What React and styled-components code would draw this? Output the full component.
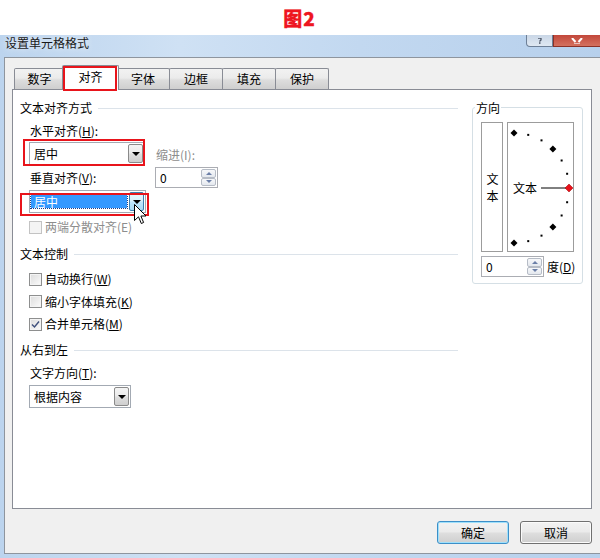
import React from 'react';
import styled, { createGlobalStyle } from 'styled-components';

const GlobalStyle = createGlobalStyle`
  html, body {
    margin: 0;
    padding: 0;
    background: #fff;
  }
  body {
    font-family: 'Noto Sans CJK SC', 'Liberation Sans', sans-serif;
    font-size: 12px;
    color: #000;
  }
`;

const TABS = ['数字', '对齐', '字体', '边框', '填充', '保护'];

const Dial = () => {
  const cx = 6;
  const cy = 65;
  const r = 55;
  const marks = [];
  for (let a = -90; a <= 90; a += 15) {
    const rad = (a * Math.PI) / 180;
    const x = cx + r * Math.cos(rad);
    const y = cy - r * Math.sin(rad);
    if (a === 0) {
      marks.push(<path key={a} d={`M${x} ${y - 4}L${x + 4} ${y}L${x} ${y + 4}L${x - 4} ${y}Z`} fill="#e8101a" stroke="#900" strokeWidth="0.5" />);
    } else if (a % 45 === 0) {
      marks.push(<path key={a} d={`M${x} ${y - 3.5}L${x + 3.5} ${y}L${x} ${y + 3.5}L${x - 3.5} ${y}Z`} fill="#000" />);
    } else {
      marks.push(<rect key={a} x={x - 1} y={y - 1} width="2" height="2" fill="#000" />);
    }
  }
  return (
    <svg width="65" height="128" viewBox="0 0 65 128">
      <text x="5" y="69.5" fontSize="12" fontFamily="'Noto Sans CJK SC', sans-serif" fill="#000">文本</text>
      <line x1="33" y1="65" x2="58" y2="65" stroke="#000" strokeWidth="1" />
      {marks}
    </svg>
  );
};

const Cursor = () => (
  <CursorSvg width="13" height="21" viewBox="0 0 13 21">
    <path d="M0.5 0.5 L0.5 16.5 L4.5 12.8 L7.3 19.5 L9.6 18.5 L6.9 12 L12 12 Z" fill="#fff" stroke="#000" strokeWidth="1" strokeLinejoin="round" />
  </CursorSvg>
);

const Combo = ({ value, width, focused, mark }) => (
  <ComboBox $width={width}>
    <ComboText $focused={focused}>{value}</ComboText>
    <ComboButton $hot={focused}>
      <Arrow />
    </ComboButton>
    {mark && <RedMark {...mark} />}
    {focused && <Cursor />}
  </ComboBox>
);

const Spin = ({ value }) => (
  <SpinBox>
    <SpinValue>{value}</SpinValue>
    <SpinButtons>
      <SpinBtn><SpinArrow $up /></SpinBtn>
      <SpinBtn><SpinArrow /></SpinBtn>
    </SpinButtons>
  </SpinBox>
);

const Check = ({ checked, disabled, children }) => (
  <CheckRow $disabled={disabled}>
    <CheckBox $disabled={disabled}>
      {checked && (
        <svg width="9" height="9" viewBox="0 0 9 9">
          <path d="M1 4.5 L3.5 7 L8 1.5" fill="none" stroke="#3e4f7c" strokeWidth="1.4" />
        </svg>
      )}
    </CheckBox>
    <span>{children}</span>
  </CheckRow>
);

const App = () => (
  <Page>
    <GlobalStyle />
    <Caption>图2</Caption>
    <Window>
      <TitleBar>
        <Title>设置单元格格式</Title>
        <Controls>
          <HelpButton>
            {/* only the lower tip of the "?" glyph is visible */}
            <svg width="8" height="6" viewBox="0 0 8 6">
              <path d="M2 0 L5 0 L5 2 L3.5 3.5" fill="none" stroke="#4b5566" strokeWidth="1.3" />
              <rect x="3" y="4.3" width="1.5" height="1.5" fill="#4b5566" />
            </svg>
          </HelpButton>
          <CloseButton>
            <svg width="12" height="6" viewBox="0 0 12 6">
              <path d="M1 0 L4.5 4 M11 0 L7.5 4" stroke="#fff" strokeWidth="2" />
              <path d="M3 5.5 L9 5.5" stroke="#fff" strokeWidth="1" opacity="0.6" />
            </svg>
          </CloseButton>
        </Controls>
      </TitleBar>
      <Client>
        <TabRow>
          {TABS.map((t, i) => (
            <Tab key={t} $active={t === '对齐'} $first={i === 0}>
              {t}
              {t === '对齐' && <TabMark />}
            </Tab>
          ))}
        </TabRow>
        <Panel>
          <LeftCol>
            <Header>文本对齐方式</Header>
            <Indented>
              <AlignGrid>
                <Label>水平对齐(<u>H</u>):</Label>
                <span />
                <Combo value="居中" width={116} mark={{ $t: -4, $l: -7, $r: -1, $b: -2 }} />
                <Label $disabled $end>缩进(I):</Label>
                <Label $center>垂直对齐(<u>V</u>):</Label>
                <Spin value="0" />
                <Combo value="居中" width={117} focused mark={{ $t: 2, $l: -10, $r: -4, $b: -4 }} />
              </AlignGrid>
              <Check disabled>两端分散对齐(E)</Check>
            </Indented>
            <Header $mt={11}>文本控制</Header>
            <Indented $gap={6.5} $mt={9}>
              <Check>自动换行(<u>W</u>)</Check>
              <Check>缩小字体填充(<u>K</u>)</Check>
              <Check checked>合并单元格(<u>M</u>)</Check>
            </Indented>
            <Header $mt={10}>从右到左</Header>
            <Indented $mt={7} $gap={4}>
              <Label>文字方向(<u>T</u>):</Label>
              <Combo value="根据内容" width={102} />
            </Indented>
          </LeftCol>
          <GroupBox>
            <GroupTitle>方向</GroupTitle>
            <OrientRow>
              <VertBox>文本</VertBox>
              <DialBox>
                <Dial />
              </DialBox>
            </OrientRow>
            <DegreeRow>
              <Spin value="0" />
              <DegreeLabel>度(<u>D</u>)</DegreeLabel>
            </DegreeRow>
          </GroupBox>
        </Panel>
        <ButtonRow>
          <PushButton $default>确定</PushButton>
          <PushButton>取消</PushButton>
        </ButtonRow>
      </Client>
    </Window>
  </Page>
);

export default App;

const Page = styled.div`
  width: 600px;
  height: 558px;
  overflow: hidden;
  display: flex;
  flex-direction: column;
`;

const Caption = styled.div`
  height: 35px;
  flex: none;
  display: flex;
  align-items: center;
  justify-content: center;
  padding-right: 1px;
  font-family: 'Noto Sans CJK SC', sans-serif;
  font-size: 19px;
  font-weight: 900;
  color: #ee1520;
  -webkit-text-stroke: 0.3px #ee1520;
  letter-spacing: 1px;
`;

const Window = styled.div`
  flex: 1;
  display: flex;
  flex-direction: column;
  padding: 0 0 4px 4px;
  background: linear-gradient(90deg, #bcd4ee 0%, #cfe1f4 30%, #c2d8f0 60%, #b7d0ec 100%);
`;

const TitleBar = styled.div`
  height: 22px;
  flex: none;
  display: flex;
  justify-content: space-between;
  align-items: flex-start;
`;

const Title = styled.div`
  padding-left: 1px;
  line-height: 16px;
  color: #1a1a1a;
  text-shadow: 0 0 6px rgba(255, 255, 255, 0.9);
`;

const Controls = styled.div`
  display: flex;
`;

const HelpButton = styled.div`
  width: 27px;
  height: 12px;
  box-sizing: border-box;
  border: 1px solid #6d7f96;
  border-top: none;
  border-radius: 0 0 0 4px;
  background: linear-gradient(180deg, #c9d6e6, #dfe8f2);
  display: flex;
  align-items: flex-end;
  justify-content: center;
  padding-bottom: 2px;
`;

const CloseButton = styled.div`
  width: 47px;
  height: 12px;
  box-sizing: border-box;
  border: 1px solid #8b3127;
  border-top: none;
  border-right: none;
  background: linear-gradient(180deg, #c2473a, #d4715f);
  display: flex;
  align-items: flex-end;
  justify-content: center;
  padding-bottom: 2px;
`;

const Client = styled.div`
  flex: 1;
  box-sizing: border-box;
  background: #f0f0f0;
  border: 1px solid #8e959e;
  border-right: none;
  padding: 7px 0 0 7px;
`;

const TabRow = styled.div`
  display: flex;
  align-items: flex-end;
  padding-left: 2px;
  height: 24px;
`;

const Tab = styled.div`
  position: relative;
  box-sizing: border-box;
  width: ${(p) => (p.$active ? 57 : p.$first ? 51 : 54)}px;
  height: ${(p) => (p.$active ? 25 : 21)}px;
  margin: 0 ${(p) => (p.$active ? -3 : -1)}px ${(p) => (p.$active ? -1 : 0)}px ${(p) => (p.$active ? -2 : 0)}px;
  border: 1px solid #898c95;
  border-bottom: none;
  border-radius: 2px 2px 0 0;
  background: ${(p) => (p.$active ? '#fff' : 'linear-gradient(180deg, #f2f2f2 0%, #ebebeb 45%, #dddddd 55%, #cfcfcf 100%)')};
  z-index: ${(p) => (p.$active ? 2 : 1)};
  display: flex;
  align-items: center;
  justify-content: center;
  padding-bottom: ${(p) => (p.$active ? 2 : 0)}px;
  line-height: 16px;
`;

const TabMark = styled.div`
  position: absolute;
  inset: 0 1px -1px 0;
  border: 2px solid #e8141b;
  pointer-events: none;
`;

const Panel = styled.div`
  width: 580px;
  height: 420px;
  box-sizing: border-box;
  border: 1px solid #898c95;
  background: #fff;
  display: flex;
  gap: 14px;
  padding: 10px 8px 0 7px;
`;

const LeftCol = styled.div`
  width: 438px;
  display: flex;
  flex-direction: column;
`;

const Header = styled.div`
  display: flex;
  align-items: center;
  height: 16px;
  line-height: 16px;
  margin-top: ${(p) => p.$mt || 0}px;
  &::after {
    content: '';
    flex: 1;
    height: 1px;
    margin-left: 6px;
    background: #dce3ea;
  }
`;

const Indented = styled.div`
  display: flex;
  flex-direction: column;
  gap: ${(p) => p.$gap || 0}px;
  padding-left: 9px;
  margin-top: ${(p) => p.$mt || 0}px;
`;

const AlignGrid = styled.div`
  display: grid;
  grid-template-columns: 126px 80px;
  grid-template-rows: 17px 23px 21px 23px;
  row-gap: 2px;
  margin: 7px 0 6px;
`;

const Label = styled.div`
  line-height: 16px;
  padding-left: 1px;
  color: ${(p) => (p.$disabled ? '#8d8d8d' : '#000')};
  align-self: ${(p) => (p.$center ? 'center' : 'start')};
  margin-top: ${(p) => (p.$end ? 5 : 0)}px;
`;

const ComboBox = styled.div`
  position: relative;
  width: ${(p) => p.$width}px;
  height: 23px;
  box-sizing: border-box;
  border: 1px solid #a3aab3;
  background: #fff;
  display: flex;
  align-items: center;
  padding: 1px;
`;

const ComboText = styled.div`
  flex: 1;
  height: ${(p) => (p.$focused ? 13 : 16)}px;
  line-height: ${(p) => (p.$focused ? 13 : 16)}px;
  margin-right: 2px;
  padding-left: 3px;
  background: ${(p) => (p.$focused ? '#3399ff' : 'transparent')};
  color: ${(p) => (p.$focused ? '#fff' : '#000')};
  outline: ${(p) => (p.$focused ? '1px dotted #1a3f8a' : 'none')};
`;

const ComboButton = styled.div`
  width: 15px;
  height: 100%;
  box-sizing: border-box;
  border: 1px solid ${(p) => (p.$hot ? '#3c7fb1' : '#8a8a8a')};
  border-radius: 2px;
  background: ${(p) =>
    p.$hot
      ? 'linear-gradient(180deg, #eaf6fd 0%, #d9f0fc 45%, #bee6fd 55%, #a7d9f5 100%)'
      : 'linear-gradient(180deg, #f4f4f4 0%, #ebebeb 45%, #dddddd 55%, #cfcfcf 100%)'};
  display: flex;
  align-items: center;
  justify-content: center;
`;

const Arrow = styled.div`
  width: 0;
  height: 0;
  border-left: 4px solid transparent;
  border-right: 4px solid transparent;
  border-top: 4px solid #000;
`;

const RedMark = styled.div`
  position: absolute;
  top: ${(p) => p.$t}px;
  left: ${(p) => p.$l}px;
  right: ${(p) => p.$r}px;
  bottom: ${(p) => p.$b}px;
  border: 2px solid #e8141b;
  pointer-events: none;
`;

const CursorSvg = styled.svg`
  position: absolute;
  left: 104px;
  top: 13px;
  z-index: 3;
`;

const SpinBox = styled.div`
  width: 63px;
  height: 21px;
  flex: none;
  box-sizing: border-box;
  border: 1px solid #abadb3;
  background: #fff;
  display: flex;
`;

const SpinValue = styled.div`
  flex: 1;
  padding-left: 4px;
  line-height: 19px;
`;

const SpinButtons = styled.div`
  width: 15px;
  display: flex;
  flex-direction: column;
  padding: 1px 1px 1px 0;
`;

const SpinBtn = styled.div`
  flex: 1;
  box-sizing: border-box;
  border: 1px solid #b6bcc6;
  border-radius: 2px;
  background: linear-gradient(180deg, #f7f8fa, #e4e8ee);
  display: flex;
  align-items: center;
  justify-content: center;
`;

const SpinArrow = styled.div`
  width: 0;
  height: 0;
  border-left: 3px solid transparent;
  border-right: 3px solid transparent;
  ${(p) => (p.$up ? 'border-bottom: 3px solid #6b7fa8;' : 'border-top: 3px solid #6b7fa8;')}
`;

const CheckRow = styled.div`
  display: flex;
  align-items: center;
  gap: 3px;
  height: 16px;
  line-height: 16px;
  color: ${(p) => (p.$disabled ? '#8d8d8d' : '#000')};
`;

const CheckBox = styled.div`
  width: 13px;
  height: 13px;
  box-sizing: border-box;
  border: 1px solid ${(p) => (p.$disabled ? '#c3c3c3' : '#8e8f8f')};
  background: ${(p) => (p.$disabled ? '#f4f4f4' : 'linear-gradient(135deg, #dcdcdc, #fbfbfb)')};
  box-shadow: inset 0 0 0 1px #f4f4f4;
  display: flex;
  align-items: center;
  justify-content: center;
`;

const GroupBox = styled.div`
  width: 111px;
  height: 177px;
  box-sizing: border-box;
  margin-top: 7px;
  border: 1px solid #d5dfe5;
  border-radius: 3px;
  padding: 0 8px 5px;
  display: flex;
  flex-direction: column;
`;

const GroupTitle = styled.div`
  width: fit-content;
  margin: -8px 0 0 -6px;
  padding: 0 1px;
  background: #fff;
  line-height: 16px;
`;

const OrientRow = styled.div`
  display: flex;
  gap: 4px;
  margin-top: 6px;
`;

const VertBox = styled.div`
  width: 22px;
  height: 130px;
  box-sizing: border-box;
  border: 1px solid #9c9c9c;
  display: flex;
  align-items: center;
  justify-content: center;
  writing-mode: vertical-rl;
  text-orientation: upright;
  letter-spacing: 5px;
  padding-top: 5px;
  line-height: 12px;
`;

const DialBox = styled.div`
  width: 67px;
  height: 130px;
  box-sizing: border-box;
  border: 1px solid #9c9c9c;
  display: flex;
`;

const DegreeRow = styled.div`
  display: flex;
  align-items: center;
  gap: 3px;
  margin-top: 4px;
  line-height: 16px;
  margin-right: -6px;
`;

const DegreeLabel = styled.span`
  white-space: nowrap;
`;

const ButtonRow = styled.div`
  width: 580px;
  display: flex;
  justify-content: flex-end;
  gap: 11px;
  margin-top: 12px;
`;

const PushButton = styled.div`
  width: 72px;
  height: 23px;
  box-sizing: border-box;
  border: 1px solid ${(p) => (p.$default ? '#3c8fc8' : '#707070')};
  border-radius: 3px;
  background: linear-gradient(180deg, #f2f2f2 0%, #ebebeb 45%, #dddddd 55%, #cfcfcf 100%);
  box-shadow: inset 0 0 0 1px ${(p) => (p.$default ? '#9fe0fb' : '#fbfbfb')};
  display: flex;
  align-items: center;
  justify-content: center;
  line-height: 16px;
`;
